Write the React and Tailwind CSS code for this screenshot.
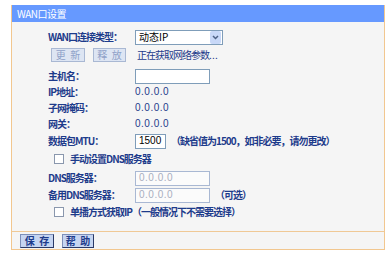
import React from 'react';

const navy = 'text-[#1d3b8b]';
const cjk = "font-['Noto_Sans_CJK_SC',sans-serif] text-[10px] tracking-[-1px] whitespace-nowrap";

function Label({ children }) {
  return <div className={`w-[87px] shrink-0 font-bold ${navy} ${cjk}`}>{children}</div>;
}

function Row({ className = '', children }) {
  return <div className={`flex items-center h-[16px] pl-[36px] whitespace-nowrap ${className}`}>{children}</div>;
}

function TextBox({ value = '', w = 'w-[75px]', disabled = false }) {
  return (
    <div
      className={`${w} h-[15px] shrink-0 border flex items-center px-[3px] text-[10px] font-['Liberation_Sans',sans-serif] ${
        disabled ? 'border-[#a9b8d3] bg-[#fbfbfb] text-[#a9aebf] tracking-[0.5px]' : 'border-[#7f9db9] bg-white text-black'
      }`}
    >
      {value}
    </div>
  );
}

function Check({ children }) {
  return (
    <div className="flex items-center h-[16px] pl-[42px]">
      <div className="w-[10px] h-[10px] shrink-0 border border-[#8a97ad] bg-white" />
      <span className={`ml-[6px] font-bold ${navy} ${cjk}`}>{children}</span>
    </div>
  );
}

function Value({ children }) {
  return <span className={`${navy} font-['Liberation_Sans',sans-serif] text-[10px] tracking-[0.5px]`}>{children}</span>;
}

function Btn({ children, disabled = false, className = '' }) {
  return (
    <div
      className={`h-[14px] shrink-0 border flex items-center justify-center whitespace-nowrap font-['Noto_Sans_CJK_SC',sans-serif] text-[10px] ${
        disabled
          ? 'border-[#a9b8d3] bg-[#dde5f3] text-[#8fa1c8]'
          : 'bg-[#c6d5f1] border-[#7d8fb8] border-r-[#2b3a66] border-b-[#2b3a66] font-bold text-[#1d3b8b]'
      } ${className}`}
    >
      {children}
    </div>
  );
}

export default function App() {
  return (
    <div className="w-[391px] h-[255px] bg-white pt-[5px] pl-[11px] leading-none">
      <div className="w-[374px] border border-[#f2c78f] border-t-0 bg-[#f5f5f5]">
        <div className="h-[17px] bg-[#6699ff] flex items-center pl-[5px] text-white font-['Noto_Sans_CJK_SC',sans-serif] text-[10px] tracking-[-0.5px]">
          WAN口设置
        </div>

        <div className="flex flex-col pt-[7px] pb-[11px]">
          <Row>
            <Label>WAN口连接类型：</Label>
            <div className="w-[88px] h-[15px] border border-[#7f9db9] bg-white flex items-center justify-between">
              <span className={`pl-[3px] text-black ${cjk} tracking-normal`}>动态IP</span>
              <div className="w-[11px] h-[13px] mr-[1px] rounded-[2px] bg-[#c8d8f8] flex items-center justify-center">
                <svg width="7" height="5" viewBox="0 0 7 5">
                  <path d="M1 1 L3.5 3.5 L6 1" stroke="#4d6185" strokeWidth="1.5" fill="none" />
                </svg>
              </div>
            </div>
          </Row>

          <Row className="mt-[2px] pl-[39px]">
            <Btn disabled className="w-[34px]">更&nbsp;&nbsp;新</Btn>
            <Btn disabled className="ml-[8px] w-[33px]">释&nbsp;&nbsp;放</Btn>
            <span className={`ml-[11px] ${navy} ${cjk}`}>正在获取网络参数. . .</span>
          </Row>

          <Row className="mt-[5px]">
            <Label>主机名：</Label>
            <TextBox />
          </Row>
          <Row>
            <Label>IP地址：</Label>
            <Value>0.0.0.0</Value>
          </Row>
          <Row>
            <Label>子网掩码：</Label>
            <Value>0.0.0.0</Value>
          </Row>
          <Row>
            <Label>网关：</Label>
            <Value>0.0.0.0</Value>
          </Row>
          <Row className="mt-[1px]">
            <Label>数据包MTU：</Label>
            <TextBox value="1500" w="w-[31px]" />
            <span className={`ml-[5px] font-bold ${navy} ${cjk}`}>（缺省值为1500，如非必要，请勿更改）</span>
          </Row>

          <div className="mt-[2px]">
            <Check>手动设置DNS服务器</Check>
          </div>

          <Row className="mt-[3px]">
            <Label>DNS服务器：</Label>
            <TextBox value="0.0.0.0" disabled />
          </Row>
          <Row className="mt-[1px]">
            <Label>备用DNS服务器：</Label>
            <TextBox value="0.0.0.0" disabled />
            <span className={`ml-[5px] font-bold ${navy} ${cjk}`}>（可选）</span>
          </Row>

          <div className="mt-[1px]">
            <Check>单播方式获取IP（一般情况下不需要选择）</Check>
          </div>
        </div>

        <div className="border-t border-[#f0c996] h-[18px] flex items-center pl-[8px]">
          <Btn className="w-[34px] h-[13px]">保&nbsp;&nbsp;存</Btn>
          <Btn className="ml-[8px] w-[32px] h-[13px]">帮&nbsp;&nbsp;助</Btn>
        </div>
      </div>
    </div>
  );
}
